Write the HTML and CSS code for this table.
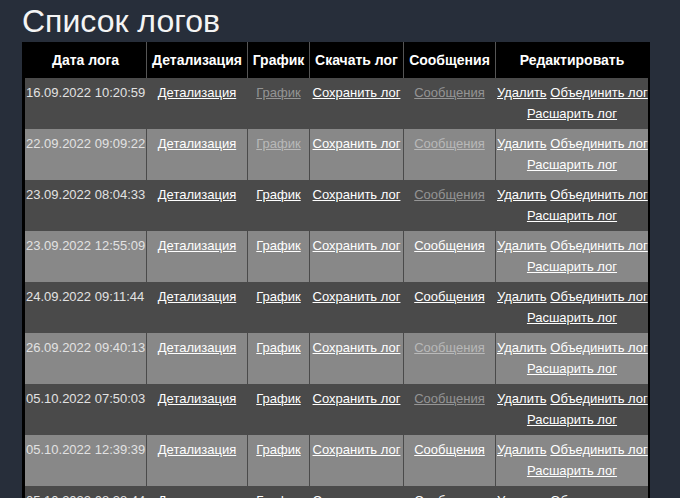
FILE: index.html
```html
<!DOCTYPE html>
<html lang="ru">
<head>
<meta charset="utf-8">
<title>Список логов</title>
<link rel="stylesheet" href="styles.css">
</head>
<body>
<h1 class="page-title">Список логов</h1>
<table class="logs">
  <colgroup>
    <col class="c-date"><col class="c-detail"><col class="c-chart"><col class="c-save"><col class="c-msg"><col class="c-edit">
  </colgroup>
  <thead>
    <tr>
      <th>Дата лога</th>
      <th>Детализация</th>
      <th>График</th>
      <th>Скачать лог</th>
      <th>Сообщения</th>
      <th class="last">Редактировать</th>
    </tr>
  </thead>
  <tbody>
    <tr class="dark">
      <td class="date">16.09.2022 10:20:59</td>
      <td><a href="#">Детализация</a></td>
      <td><a href="#" class="off">График</a></td>
      <td><a href="#">Сохранить лог</a></td>
      <td><a href="#" class="off">Сообщения</a></td>
      <td class="last"><a href="#">Удалить</a> <a href="#">Объединить лог</a><br><a href="#">Расшарить лог</a></td>
    </tr>
    <tr class="light">
      <td class="date">22.09.2022 09:09:22</td>
      <td><a href="#">Детализация</a></td>
      <td><a href="#" class="off">График</a></td>
      <td><a href="#">Сохранить лог</a></td>
      <td><a href="#" class="off">Сообщения</a></td>
      <td class="last"><a href="#">Удалить</a> <a href="#">Объединить лог</a><br><a href="#">Расшарить лог</a></td>
    </tr>
    <tr class="dark">
      <td class="date">23.09.2022 08:04:33</td>
      <td><a href="#">Детализация</a></td>
      <td><a href="#">График</a></td>
      <td><a href="#">Сохранить лог</a></td>
      <td><a href="#" class="off">Сообщения</a></td>
      <td class="last"><a href="#">Удалить</a> <a href="#">Объединить лог</a><br><a href="#">Расшарить лог</a></td>
    </tr>
    <tr class="light">
      <td class="date">23.09.2022 12:55:09</td>
      <td><a href="#">Детализация</a></td>
      <td><a href="#">График</a></td>
      <td><a href="#">Сохранить лог</a></td>
      <td><a href="#">Сообщения</a></td>
      <td class="last"><a href="#">Удалить</a> <a href="#">Объединить лог</a><br><a href="#">Расшарить лог</a></td>
    </tr>
    <tr class="dark">
      <td class="date">24.09.2022 09:11:44</td>
      <td><a href="#">Детализация</a></td>
      <td><a href="#">График</a></td>
      <td><a href="#">Сохранить лог</a></td>
      <td><a href="#">Сообщения</a></td>
      <td class="last"><a href="#">Удалить</a> <a href="#">Объединить лог</a><br><a href="#">Расшарить лог</a></td>
    </tr>
    <tr class="light">
      <td class="date">26.09.2022 09:40:13</td>
      <td><a href="#">Детализация</a></td>
      <td><a href="#">График</a></td>
      <td><a href="#">Сохранить лог</a></td>
      <td><a href="#" class="off">Сообщения</a></td>
      <td class="last"><a href="#">Удалить</a> <a href="#">Объединить лог</a><br><a href="#">Расшарить лог</a></td>
    </tr>
    <tr class="dark">
      <td class="date">05.10.2022 07:50:03</td>
      <td><a href="#">Детализация</a></td>
      <td><a href="#">График</a></td>
      <td><a href="#">Сохранить лог</a></td>
      <td><a href="#" class="off">Сообщения</a></td>
      <td class="last"><a href="#">Удалить</a> <a href="#">Объединить лог</a><br><a href="#">Расшарить лог</a></td>
    </tr>
    <tr class="light">
      <td class="date">05.10.2022 12:39:39</td>
      <td><a href="#">Детализация</a></td>
      <td><a href="#">График</a></td>
      <td><a href="#">Сохранить лог</a></td>
      <td><a href="#">Сообщения</a></td>
      <td class="last"><a href="#">Удалить</a> <a href="#">Объединить лог</a><br><a href="#">Расшарить лог</a></td>
    </tr>
    <tr class="dark">
      <td class="date">05.10.2022 08:38:44</td>
      <td><a href="#">Детализация</a></td>
      <td><a href="#">График</a></td>
      <td><a href="#">Сохранить лог</a></td>
      <td><a href="#">Сообщения</a></td>
      <td class="last"><a href="#">Удалить</a> <a href="#">Объединить лог</a><br><a href="#">Расшарить лог</a></td>
    </tr>
  </tbody>
</table>
</body>
</html>
```
FILE: styles.css
```css
html, body {
  margin: 0;
  background: #272e3a;
}
body {
  padding: 0 0 0 22px;
  font-family: "Liberation Sans", Arial, sans-serif;
  color: #fff;
}
.page-title {
  margin: 3px 0 3px;
  font-size: 32px;
  line-height: 36px;
  font-weight: normal;
  color: #f4f4f4;
}
.logs {
  border-collapse: separate;
  border-spacing: 0;
  table-layout: fixed;
  width: 628px;
  background: #000;
  border-left: 3px solid #000;
  border-right: 2px solid #000;
}
.c-date { width: 122px; }
.c-detail { width: 101px; }
.c-chart { width: 62px; }
.c-save { width: 94px; }
.c-msg { width: 92px; }
.c-edit { width: 152px; }

.logs th,
.logs td {
  box-sizing: border-box;
  border-right: 1px solid #4a4a4a;
  padding: 0 1px;
  text-align: center;
}
.logs th.last,
.logs td.last { border-right: 0; }

.logs th {
  height: 36px;
  font-size: 14px;
  font-weight: bold;
  line-height: 16px;
  vertical-align: middle;
  white-space: nowrap;
  border-right-color: #555;
}
.logs td {
  height: 51px;
  padding-top: 4px;
  padding-bottom: 5px;
  font-size: 13px;
  line-height: 21px;
  vertical-align: top;
  white-space: nowrap;
}
.logs td.date {
  text-align: left;
  padding-left: 1px;
  color: #e2e2e2;
}
tr.dark td { background: #4a4a4a; }
tr.light td { background: #888888; }

.logs a {
  color: #fff;
  text-decoration: underline;
}
.logs a.off {
  color: rgba(255, 255, 255, 0.42);
}
```
